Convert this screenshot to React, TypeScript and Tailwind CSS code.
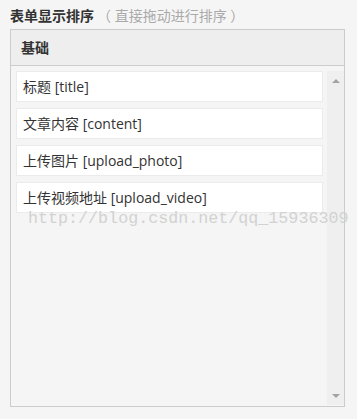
const items = ["标题 [title]", "文章内容 [content]", "上传图片 [upload_photo]", "上传视频地址 [upload_video]"];

export default function App() {
  return (
    <div
      className="relative w-[357px] h-[419px] bg-[#f5f5f5] pt-[7px] pl-[10px]"
      style={{ fontFamily: '"Open Sans", "Noto Sans CJK SC", sans-serif' }}
    >
      {/* title */}
      <div className="flex items-center h-[18px] text-[14px] leading-[18px]">
        <span className="font-bold text-[#333]">表单显示排序</span>
        <span className="ml-[3px] text-[#aaa]">（ 直接拖动进行排序 ）</span>
      </div>

      {/* panel */}
      <div className="mt-[4px] w-[335px] h-[378px] border border-[#cccccc] flex flex-col">
        <div className="h-[36px] bg-[#eeeeee] border-b border-[#cccccc] flex items-center pl-[10px] text-[14px] font-bold text-[#333]">
          基础
        </div>
        <div className="flex-1 flex pt-[5px] pb-[1px]">
          <div className="flex-1 pl-[5px] pr-[4px] flex flex-col gap-[6px]">
            {items.map((t) => (
              <div
                key={t}
                className="h-[31px] bg-white border border-[#ebebeb] flex items-center pl-[6px] text-[14px] text-[#333]"
              >
                {t}
              </div>
            ))}
          </div>
          <div className="w-[17px] bg-[#efefef] flex flex-col justify-between items-center pt-[8px] pb-[7px]">
            <div className="w-0 h-0 border-l-[4px] border-r-[4px] border-b-[4px] border-l-transparent border-r-transparent border-b-[#a3a3a3]" />
            <div className="w-0 h-0 border-l-[4px] border-r-[4px] border-t-[4px] border-l-transparent border-r-transparent border-t-[#a3a3a3]" />
          </div>
        </div>
      </div>

      {/* watermark */}
      <div
        className="absolute left-[28px] top-[208px] text-[16.7px] leading-[22px] text-[#d2d2d2] pointer-events-none whitespace-nowrap"
        style={{ fontFamily: '"Liberation Mono", monospace' }}
      >
        http://blog.csdn.net/qq_15936309
      </div>
    </div>
  );
}
